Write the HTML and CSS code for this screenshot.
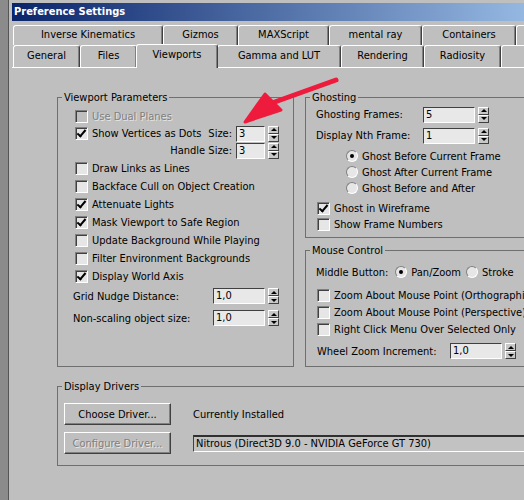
FILE: index.html
```html
<!DOCTYPE html>
<html lang="en">
<head>
  <meta charset="UTF-8" />
  <title>Preference Settings</title>
  <link rel="stylesheet" href="styles.css">
</head>
<body>
  <div class="window">
    <div class="titlebar">Preference Settings</div>

    <div class="tabs">
      <div class="tabrow back">
        <div class="tab">Inverse Kinematics</div>
        <div class="tab">Gizmos</div>
        <div class="tab">MAXScript</div>
        <div class="tab">mental ray</div>
        <div class="tab">Containers</div>
        <div class="tab">Help</div>
      </div>
      <div class="tabrow front">
        <div class="tab">General</div>
        <div class="tab">Files</div>
        <div class="tab active">Viewports</div>
        <div class="tab">Gamma and LUT</div>
        <div class="tab">Rendering</div>
        <div class="tab">Radiosity</div>
        <div class="tab">Animation</div>
      </div>
    </div>

    <div class="panel">
      <div class="columns">
        <fieldset class="group">
          <legend>Viewport Parameters</legend>
          <div class="vp-body">
            <div class="row disabled"><span class="check"></span>Use Dual Planes</div>
            <div class="row tight"><span class="check on"></span>Show Vertices as Dots<span class="push">Size:</span><span class="field small">3</span><span class="spin"><span class="up"></span><span class="down"></span></span></div>
            <div class="row tight end">Handle Size:<span class="field small">3</span><span class="spin"><span class="up"></span><span class="down"></span></span></div>
            <div class="row"><span class="check"></span>Draw Links as Lines</div>
            <div class="row"><span class="check"></span>Backface Cull on Object Creation</div>
            <div class="row"><span class="check on"></span>Attenuate Lights</div>
            <div class="row"><span class="check on"></span>Mask Viewport to Safe Region</div>
            <div class="row"><span class="check"></span>Update Background While Playing</div>
            <div class="row"><span class="check"></span>Filter Environment Backgrounds</div>
            <div class="row"><span class="check on"></span>Display World Axis</div>
            <div class="row tall">Grid Nudge Distance:<span class="field push">1,0</span><span class="spin"><span class="up"></span><span class="down"></span></span></div>
            <div class="row tall">Non-scaling object size:<span class="field push">1,0</span><span class="spin"><span class="up"></span><span class="down"></span></span></div>
          </div>
        </fieldset>

        <div class="right">
          <fieldset class="group">
            <legend>Ghosting</legend>
            <div class="ghost-body">
              <div class="row wide"><span class="label">Ghosting Frames:</span><span class="field">5</span><span class="spin"><span class="up"></span><span class="down"></span></span></div>
              <div class="row wide"><span class="label">Display Nth Frame:</span><span class="field">1</span><span class="spin"><span class="up"></span><span class="down"></span></span></div>
              <div class="options">
                <div class="row small indent"><span class="radio on"></span>Ghost Before Current Frame</div>
                <div class="row small indent"><span class="radio"></span>Ghost After Current Frame</div>
                <div class="row small indent"><span class="radio"></span>Ghost Before and After</div>
              </div>
              <div class="options">
                <div class="row small"><span class="check on"></span>Ghost in Wireframe</div>
                <div class="row small"><span class="check"></span>Show Frame Numbers</div>
              </div>
            </div>
          </fieldset>

          <fieldset class="group mouse">
            <legend>Mouse Control</legend>
            <div class="mouse-body">
              <div class="row middle">Middle Button:<span class="radio on"></span>Pan/Zoom<span class="radio second"></span>Stroke</div>
              <div class="checks">
                <div class="row compact"><span class="check"></span>Zoom About Mouse Point (Orthographic)</div>
                <div class="row compact"><span class="check"></span>Zoom About Mouse Point (Perspective)</div>
                <div class="row compact"><span class="check"></span>Right Click Menu Over Selected Only</div>
              </div>
              <div class="row tall"><span class="label wheel">Wheel Zoom Increment:</span><span class="field">1,0</span><span class="spin"><span class="up"></span><span class="down"></span></span></div>
            </div>
          </fieldset>
        </div>
      </div>

      <fieldset class="group drivers">
        <legend>Display Drivers</legend>
        <div class="drivers-body">
          <div class="button">Choose Driver...</div>
          <div class="installed">Currently Installed</div>
          <div class="button disabled">Configure Driver...</div>
          <div class="combo">Nitrous (Direct3D 9.0 - NVIDIA GeForce GT 730)</div>
        </div>
      </fieldset>
    </div>
  </div>

  <svg class="arrow" viewBox="0 0 524 500" xmlns="http://www.w3.org/2000/svg">
    <path d="M336 80 L272 103" stroke="#ee1b3d" stroke-width="5" stroke-linecap="round" fill="none"/>
    <path d="M265 94 L281 110 L245 122 Z" fill="#ee1b3d" stroke="#ee1b3d" stroke-width="3" stroke-linejoin="round"/>
  </svg>
</body>
</html>
```

FILE: styles.css
```css
body {
  margin: 0;
  height: 500px;
  overflow: hidden;
  position: relative;
  background: #8b8b8b;
  font-family: "DejaVu Sans Condensed", "Liberation Sans", sans-serif;
  font-size: 11px;
  line-height: 13px;
  color: #000;
}
.window {
  margin-left: 8px;
  width: 580px;
  height: 500px;
  box-sizing: border-box;
  padding: 3px 0 0 3px;
  background: #bfbfbf;
  border-left: 1px solid #555;
}
.titlebar {
  height: 18px;
  line-height: 18px;
  padding-left: 2px;
  background: linear-gradient(90deg, #0a246a, #a6caf0);
  color: #fff;
  font-weight: bold;
}

/* tabs */
.tabs {
  padding: 4px 0 0 1px;
}
.tabrow {
  display: grid;
}
.tabrow.back {
  grid-template-columns: 150px 75px 91px 93px 94px 100px;
  height: 20px;
}
.tabrow.front {
  grid-template-columns: 67px 57px 80px 124px 83px 77px 100px;
  height: 22px;
}
.tab {
  border: 1px solid #fff;
  border-right-color: #404040;
  border-bottom: none;
  border-radius: 3px 3px 0 0;
  box-shadow: inset -1px 0 #808080;
  background: #bfbfbf;
  text-align: center;
  line-height: 18px;
}
.front .tab {
  line-height: 20px;
}
.tab.active {
  position: relative;
  margin: -1px -1px -1px -1px;
}

.panel {
  border-top: 1px solid #fff;
  padding: 23px 0 0 45px;
}
.columns {
  display: grid;
  grid-template-columns: 237px 1fr;
  column-gap: 11px;
}

/* group boxes */
.group {
  margin: 0;
  padding: 0;
  min-width: 0;
  border: 1px solid #6f6f6f;
}
.group legend {
  margin-left: 4px;
  padding: 0 2px;
  line-height: 13px;
}
.row {
  display: flex;
  align-items: center;
  height: 18px;
  white-space: nowrap;
}
.row.tight {
  height: 17px;
}
.row.tall {
  height: 22px;
}
.row.end {
  justify-content: flex-end;
}
.row.disabled {
  color: #808080;
  text-shadow: 1px 1px 0 #e4e4e4;
}
.row.disabled .check {
  background: #bfbfbf;
}
.push {
  margin-left: auto;
}
.row .push + .field,
.row.end .field {
  margin-left: 4px;
}

.vp-body {
  padding: 3px 14px 0 15px;
}
.vp-body .check {
  margin-left: 2px;
}

.ghost-body {
  padding: 0 0 5px 10px;
}
.row.wide {
  height: 21px;
}
.label {
  width: 104px;
  margin-right: 3px;
}
.options {
  margin-top: 2px;
}
.options + .options {
  margin-top: 4px;
}
.row.small {
  height: 16px;
}
.row.small .check {
  margin-left: 1px;
}
.row.indent {
  padding-left: 30px;
}

.mouse {
  margin-top: 6px;
}
.mouse-body {
  padding: 5px 0 4px 10px;
}
.row.middle {
  height: 20px;
}
.row.middle .radio {
  margin-left: 7px;
}
.row.middle .radio.second {
  margin-left: 5px;
}
.checks {
  margin: 5px 0 2px;
}
.row.compact {
  height: 17px;
}
.row.compact .check {
  margin-left: 1px;
}
.label.wheel {
  width: 130px;
  margin-left: 1px;
}

/* controls */
.check {
  box-sizing: border-box;
  flex: none;
  width: 13px;
  height: 13px;
  margin-right: 4px;
  border: 1px solid;
  border-color: #808080 #fff #fff #808080;
  box-shadow: inset 1px 1px #404040;
  background: #e6e6e6;
  display: flex;
  align-items: center;
  justify-content: center;
}
.check.on::after {
  content: "";
  width: 3px;
  height: 7px;
  margin-top: -2px;
  border: solid #000;
  border-width: 0 2px 2px 0;
  transform: rotate(40deg);
}
.radio {
  box-sizing: border-box;
  flex: none;
  width: 12px;
  height: 12px;
  margin-right: 4px;
  border-radius: 50%;
  border: 1px solid;
  border-color: #808080 #fff #fff #808080;
  background: #e6e6e6;
  display: flex;
  align-items: center;
  justify-content: center;
}
.radio.on::after {
  content: "";
  width: 4px;
  height: 4px;
  border-radius: 50%;
  background: #000;
}
.field {
  box-sizing: border-box;
  flex: none;
  width: 52px;
  height: 16px;
  padding-left: 2px;
  line-height: 14px;
  border: 1px solid;
  border-color: #404040 #fff #fff #404040;
  background: #e8e8e8;
}
.field.small {
  width: 29px;
}
.spin {
  flex: none;
  display: flex;
  flex-direction: column;
  width: 11px;
  height: 16px;
  margin-left: 3px;
}
.spin span {
  flex: 1;
  box-sizing: border-box;
  border: 1px solid;
  border-color: #fff #404040 #404040 #fff;
  background: #c8c8c8;
  display: flex;
  align-items: center;
  justify-content: center;
}
.spin .up::after,
.spin .down::after {
  content: "";
  border-left: 3px solid transparent;
  border-right: 3px solid transparent;
}
.spin .up::after {
  border-bottom: 3px solid #000;
}
.spin .down::after {
  border-top: 3px solid #000;
}

/* display drivers */
.drivers {
  margin-top: 13px;
}
.drivers-body {
  display: grid;
  grid-template-columns: 107px 1fr;
  grid-template-rows: 22px 22px;
  column-gap: 22px;
  row-gap: 7px;
  align-items: center;
  padding: 10px 0 11px 6px;
}
.button {
  box-sizing: border-box;
  height: 22px;
  border: 1px solid;
  border-color: #fff #404040 #404040 #fff;
  box-shadow: inset -1px -1px #808080;
  display: flex;
  align-items: center;
  justify-content: center;
  white-space: nowrap;
}
.button.disabled {
  color: #808080;
  text-shadow: 1px 1px 0 #e8e8e8;
}
.installed {
  white-space: nowrap;
}
.combo {
  box-sizing: border-box;
  height: 17px;
  padding-left: 2px;
  line-height: 14px;
  border-top: 2px solid #303030;
  border-left: 1px solid #404040;
  border-bottom: 1px solid #fff;
  background: #c2c2c2;
  white-space: nowrap;
}

.arrow {
  position: absolute;
  left: 0;
  top: 0;
  width: 524px;
  height: 500px;
  pointer-events: none;
}
```
